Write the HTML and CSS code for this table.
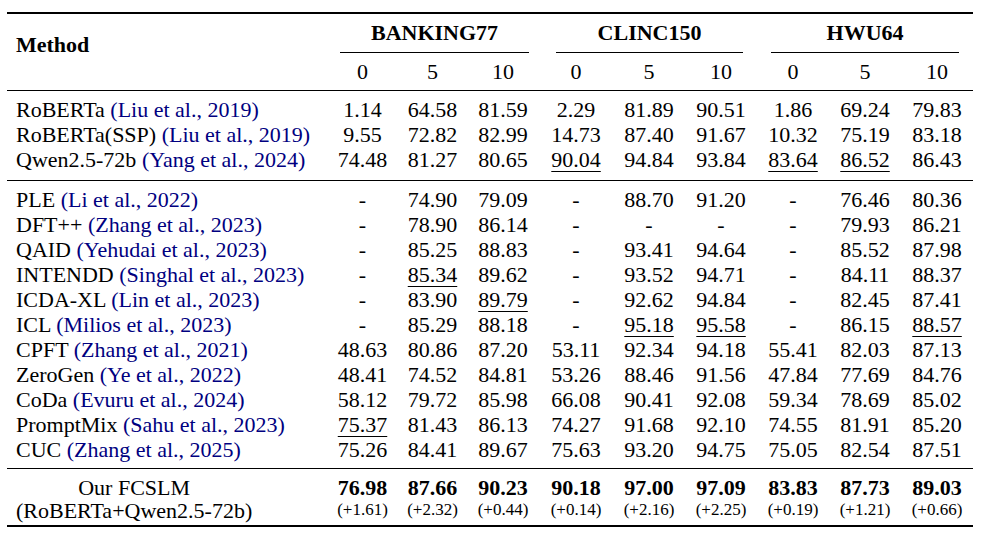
FILE: index.html
```html
<!DOCTYPE html>
<html>
<head>
<meta charset="utf-8">
<link rel="stylesheet" href="styles.css">
</head>
<body>
<table class="results">
  <colgroup>
    <col class="c-method">
    <col class="c71"><col class="c69"><col class="c72">
    <col class="c74"><col class="c72"><col class="c72">
    <col class="c72"><col class="c72"><col class="c72">
  </colgroup>
  <thead>
    <tr class="h1">
      <th rowspan="2" class="method-head">Method</th>
      <th colspan="3" class="grp"><div class="grp-rule g1">BANKING77</div></th>
      <th colspan="3" class="grp"><div class="grp-rule g2">CLINC150</div></th>
      <th colspan="3" class="grp"><div class="grp-rule g3">HWU64</div></th>
    </tr>
    <tr class="h2">
      <th>0</th><th>5</th><th>10</th>
      <th>0</th><th>5</th><th>10</th>
      <th>0</th><th>5</th><th>10</th>
    </tr>
  </thead>
  <tbody class="sec1">
    <tr class="first"><td class="m">RoBERTa <span class="cite">(Liu et al., 2019)</span></td><td>1.14</td><td>64.58</td><td>81.59</td><td>2.29</td><td>81.89</td><td>90.51</td><td>1.86</td><td>69.24</td><td>79.83</td></tr>
    <tr><td class="m">RoBERTa(SSP) <span class="cite">(Liu et al., 2019)</span></td><td>9.55</td><td>72.82</td><td>82.99</td><td>14.73</td><td>87.40</td><td>91.67</td><td>10.32</td><td>75.19</td><td>83.18</td></tr>
    <tr class="last"><td class="m">Qwen2.5-72b <span class="cite">(Yang et al., 2024)</span></td><td>74.48</td><td>81.27</td><td>80.65</td><td><span class="u">90.04</span></td><td>94.84</td><td>93.84</td><td><span class="u">83.64</span></td><td><span class="u">86.52</span></td><td>86.43</td></tr>
  </tbody>
  <tbody class="sec2">
    <tr class="first"><td class="m">PLE <span class="cite">(Li et al., 2022)</span></td><td>-</td><td>74.90</td><td>79.09</td><td>-</td><td>88.70</td><td>91.20</td><td>-</td><td>76.46</td><td>80.36</td></tr>
    <tr><td class="m">DFT++ <span class="cite">(Zhang et al., 2023)</span></td><td>-</td><td>78.90</td><td>86.14</td><td>-</td><td>-</td><td>-</td><td>-</td><td>79.93</td><td>86.21</td></tr>
    <tr><td class="m">QAID <span class="cite">(Yehudai et al., 2023)</span></td><td>-</td><td>85.25</td><td>88.83</td><td>-</td><td>93.41</td><td>94.64</td><td>-</td><td>85.52</td><td>87.98</td></tr>
    <tr><td class="m">INTENDD <span class="cite">(Singhal et al., 2023)</span></td><td>-</td><td><span class="u">85.34</span></td><td>89.62</td><td>-</td><td>93.52</td><td>94.71</td><td>-</td><td>84.11</td><td>88.37</td></tr>
    <tr><td class="m">ICDA-XL <span class="cite">(Lin et al., 2023)</span></td><td>-</td><td>83.90</td><td><span class="u">89.79</span></td><td>-</td><td>92.62</td><td>94.84</td><td>-</td><td>82.45</td><td>87.41</td></tr>
    <tr><td class="m">ICL <span class="cite">(Milios et al., 2023)</span></td><td>-</td><td>85.29</td><td>88.18</td><td>-</td><td><span class="u">95.18</span></td><td><span class="u">95.58</span></td><td>-</td><td>86.15</td><td><span class="u">88.57</span></td></tr>
    <tr><td class="m">CPFT <span class="cite">(Zhang et al., 2021)</span></td><td>48.63</td><td>80.86</td><td>87.20</td><td>53.11</td><td>92.34</td><td>94.18</td><td>55.41</td><td>82.03</td><td>87.13</td></tr>
    <tr><td class="m">ZeroGen <span class="cite">(Ye et al., 2022)</span></td><td>48.41</td><td>74.52</td><td>84.81</td><td>53.26</td><td>88.46</td><td>91.56</td><td>47.84</td><td>77.69</td><td>84.76</td></tr>
    <tr><td class="m">CoDa <span class="cite">(Evuru et al., 2024)</span></td><td>58.12</td><td>79.72</td><td>85.98</td><td>66.08</td><td>90.41</td><td>92.08</td><td>59.34</td><td>78.69</td><td>85.02</td></tr>
    <tr><td class="m">PromptMix <span class="cite">(Sahu et al., 2023)</span></td><td><span class="u">75.37</span></td><td>81.43</td><td>86.13</td><td>74.27</td><td>91.68</td><td>92.10</td><td>74.55</td><td>81.91</td><td>85.20</td></tr>
    <tr class="last"><td class="m">CUC <span class="cite">(Zhang et al., 2025)</span></td><td>75.26</td><td>84.41</td><td>89.67</td><td>75.63</td><td>93.20</td><td>94.75</td><td>75.05</td><td>82.54</td><td>87.51</td></tr>
  </tbody>
  <tbody class="sec3">
    <tr class="ours">
      <td class="m"><div class="stack"><div>Our FCSLM</div><div>(RoBERTa+Qwen2.5-72b)</div></div></td>
      <td><div class="best">76.98</div><div class="delta">(+1.61)</div></td>
      <td><div class="best">87.66</div><div class="delta">(+2.32)</div></td>
      <td><div class="best">90.23</div><div class="delta">(+0.44)</div></td>
      <td><div class="best">90.18</div><div class="delta">(+0.14)</div></td>
      <td><div class="best">97.00</div><div class="delta">(+2.16)</div></td>
      <td><div class="best">97.09</div><div class="delta">(+2.25)</div></td>
      <td><div class="best">83.83</div><div class="delta">(+0.19)</div></td>
      <td><div class="best">87.73</div><div class="delta">(+1.21)</div></td>
      <td><div class="best">89.03</div><div class="delta">(+0.66)</div></td>
    </tr>
  </tbody>
</table>
</body>
</html>
```

FILE: styles.css
```css
html, body {
  margin: 0;
  padding: 0;
  background: #ffffff;
}

body {
  font-family: "Liberation Serif", "Times New Roman", serif;
  color: #000000;
}

.results {
  margin: 12px 0 0 7px;
  border-collapse: collapse;
  table-layout: fixed;
  width: 966px;
  font-size: 22px;
  line-height: 25px;
  border-top: 2px solid #000;
  border-bottom: 2px solid #000;
}

.c-method { width: 320px; }
.c71 { width: 71px; }
.c69 { width: 69px; }
.c72 { width: 72px; }
.c74 { width: 74px; }

.results th,
.results td {
  padding: 0;
  text-align: center;
  vertical-align: top;
  white-space: nowrap;
}

.results th {
  font-weight: normal;
}

.method-head {
  font-weight: bold !important;
  text-align: left !important;
  padding: 18px 0 0 9px !important;
}

.grp-rule {
  font-weight: bold;
  padding: 6px 0;
  line-height: 26px;
  border-bottom: 1px solid #000;
}
.g1 { margin: 0 10px 0 13px; }
.g2 { margin: 0 14px 0 17px; }
.g3 { margin: 0 14px 0 14px; }

.h2 th {
  padding: 6px 0;
}

thead {
  border-bottom: 1px solid #000;
}

.sec1 {
  border-bottom: 1px solid #000;
}

.sec2 {
  border-bottom: 1px solid #000;
}

.results td.m {
  text-align: left;
  padding-left: 9px;
}

.cite {
  color: #000080;
}

.first td { padding-top: 6px; }
.sec1 .last td { padding-bottom: 8px; }
.sec2 .last td { padding-bottom: 6px; }

.u {
  text-decoration: underline;
  text-decoration-thickness: 1px;
  text-underline-offset: 4px;
}

.ours td {
  padding-top: 7px;
  padding-bottom: 3px;
  line-height: 23px;
}

.stack {
  display: inline-block;
  text-align: center;
}

.best {
  font-weight: bold;
  line-height: 24px;
}

.delta {
  font-size: 17px;
  line-height: 19px;
}
```
